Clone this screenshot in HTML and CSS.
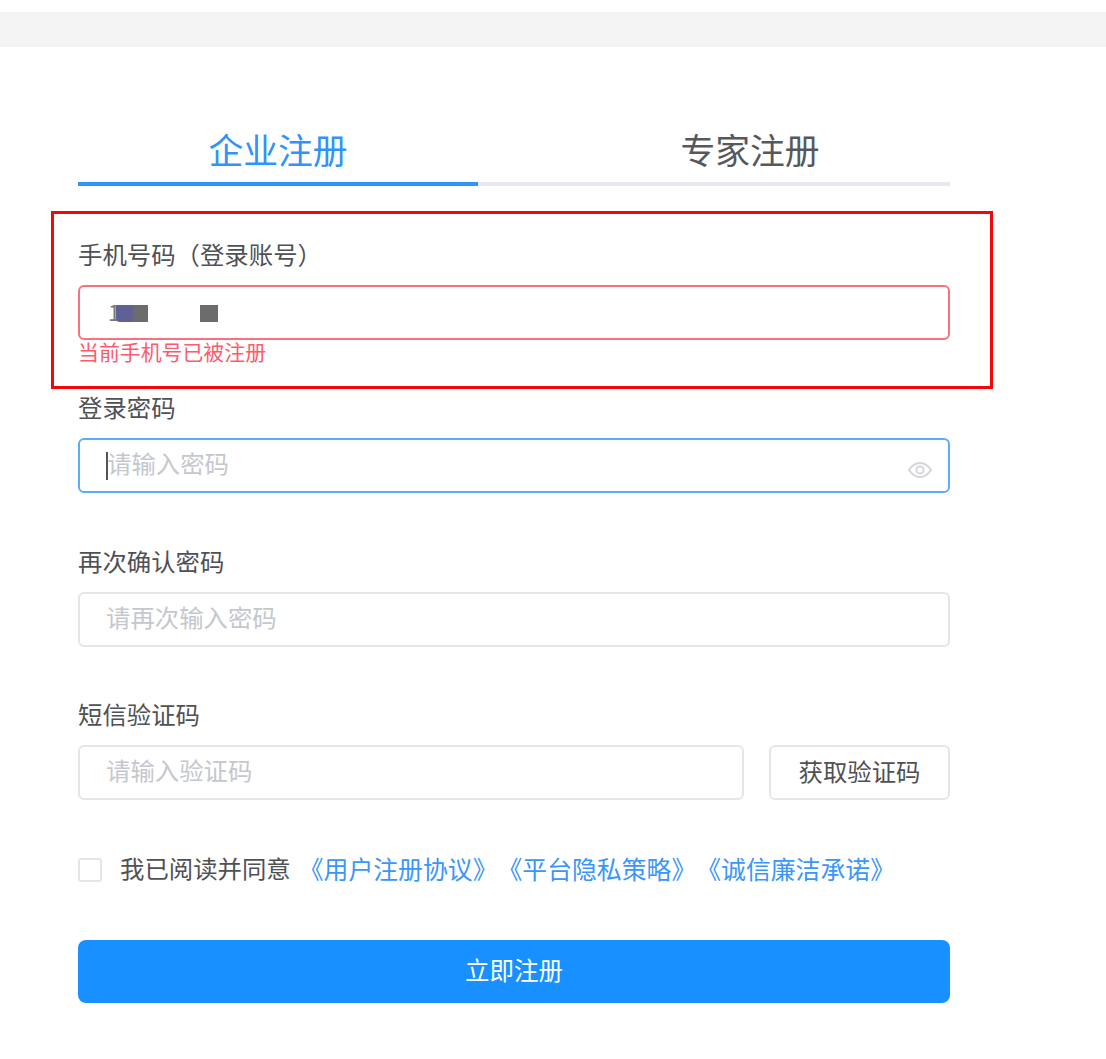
FILE: index.html
```html
<!DOCTYPE html>
<html lang="zh-CN">
<head>
<meta charset="utf-8">
<title>企业注册</title>
<link rel="stylesheet" href="styles.css">
</head>
<body>
<div class="topbar"></div>
<main class="form-wrap">
  <div class="tabs">
    <div class="tab active">企业注册</div>
    <div class="tab">专家注册</div>
  </div>
  <section class="field first">
    <label class="label">手机号码（登录账号）</label>
    <div class="input error">
      <span class="digit">1</span><span class="mosaic tint"></span><span class="mosaic"></span><span class="mosaic far"></span>
    </div>
    <div class="error-msg">当前手机号已被注册</div>
  </section>
  <section class="field second">
    <label class="label">登录密码</label>
    <div class="input focus">
      <span class="caret"></span><span class="placeholder">请输入密码</span>
      <svg class="eye" viewBox="0 0 24 16" width="24" height="16" fill="none" stroke="#d4d6d9" stroke-width="2"><path d="M1 8C4 3.500 8 1 12 1s8 2.500 11 7c-3 4.500-7 7-11 7S4 12.500 1 8z"/><circle cx="12" cy="8" r="3.600"/></svg>
    </div>
  </section>
  <section class="field">
    <label class="label">再次确认密码</label>
    <div class="input"><span class="placeholder">请再次输入密码</span></div>
  </section>
  <section class="field code">
    <label class="label">短信验证码</label>
    <div class="code-row">
      <div class="input grow"><span class="placeholder">请输入验证码</span></div>
      <button class="code-btn" type="button">获取验证码</button>
    </div>
  </section>
  <div class="agree">
    <span class="checkbox"></span>
    <span class="agree-text">我已阅读并同意</span>
    <a class="links">《用户注册协议》《平台隐私策略》《诚信廉洁承诺》</a>
  </div>
  <button class="submit" type="button">立即注册</button>
  <div class="highlight"></div>
</main>
</body>
</html>
```
FILE: styles.css
```css
* { box-sizing: border-box; }
html, body { margin: 0; padding: 0; background: #fff; }
body {
  font-family: "Noto Sans CJK SC", "Liberation Sans", sans-serif;
  color: #4a4a4a;
  padding-top: 12px;
  height: 1059px;
  overflow: hidden;
  text-spacing-trim: space-all;
}
.topbar { height: 35px; background: #f4f4f5; }
.form-wrap { position: relative; width: 872px; margin: 0 0 0 78px; padding-top: 81px; }
.tabs { display: flex; justify-content: space-between; height: 58px; border-bottom: 4px solid #e6e8f0; }
.tab { width: 400px; height: 58px; font-size: 34.800px; line-height: 42px; text-align: center; color: #55585c; }
.tab.active { color: #2f93fb; border-bottom: 4px solid #2f93fb; }
.field { padding-top: 52px; }
.field.first { padding-top: 51px; }
.field.first .label { height: 48px; padding-top: 2px; }
.field.second { padding-top: 0; margin-top: 7px; }
.field.code { padding-top: 51px; }
.label { display: block; height: 47px; font-size: 24.400px; line-height: 30px; color: #4f5155; padding-top: 1px; }
.input {
  display: flex; align-items: center; height: 55px; padding: 0 26px;
  border: 2px solid #e4e6ea; border-radius: 6px; background: #fff; position: relative;
}
.input.grow { flex: 1; }
.input.error { border-color: #f7727e; }
.input.focus { border-color: #5eaafb; }
.placeholder { font-size: 24.400px; color: #c4c7ce; line-height: 34px; margin-bottom: 5px; }
.caret { width: 2px; height: 28px; background: #555; margin-right: -1px; }
.digit { font-size: 22px; color: #777; width: 8px; line-height: 34px; margin: 0 0 4px 2px; }
.mosaic { width: 15px; height: 17px; margin-top: 2px; background: #6c6c6c; }
.mosaic.tint { width: 17px; background: #5f6096; border-radius: 0 0 0 4px; }
.mosaic.far { width: 18px; margin-left: 52px; }
.error-msg { font-size: 20.900px; line-height: 22px; color: #fb5b6c; height: 44px; }
.code-row { display: flex; gap: 25px; }
.code-btn {
  width: 181px; height: 55px; border: 2px solid #e4e6ea; border-radius: 6px;
  background: #fff; font: inherit; font-size: 24.400px; color: #4f5155; padding: 0 0 5px;
}
.agree { display: flex; align-items: center; margin-top: 57px; height: 26px; }
.checkbox { width: 24px; height: 24px; border: 2px solid #e4e6ea; border-radius: 3px; margin-right: 18px; }
.agree-text { font-size: 24.400px; line-height: 22px; color: #4f5155; margin: 0 8px 4px 0; white-space: nowrap; }
.links { font-size: 24.850px; line-height: 22px; color: #3a96f8; white-space: nowrap; margin-bottom: 4px; }
.submit {
  display: block; width: 100%; height: 63px; margin-top: 57px; border: 0; border-radius: 8px;
  background: #1890ff; color: #fff; font: inherit; font-size: 24.500px; padding: 0 0 5px;
}
.eye { position: absolute; right: 16px; top: 22px; }
.highlight {
  position: absolute; left: -27px; top: 164px; width: 942px; height: 178px;
  border: 3px solid #f5060a; pointer-events: none;
}
```
